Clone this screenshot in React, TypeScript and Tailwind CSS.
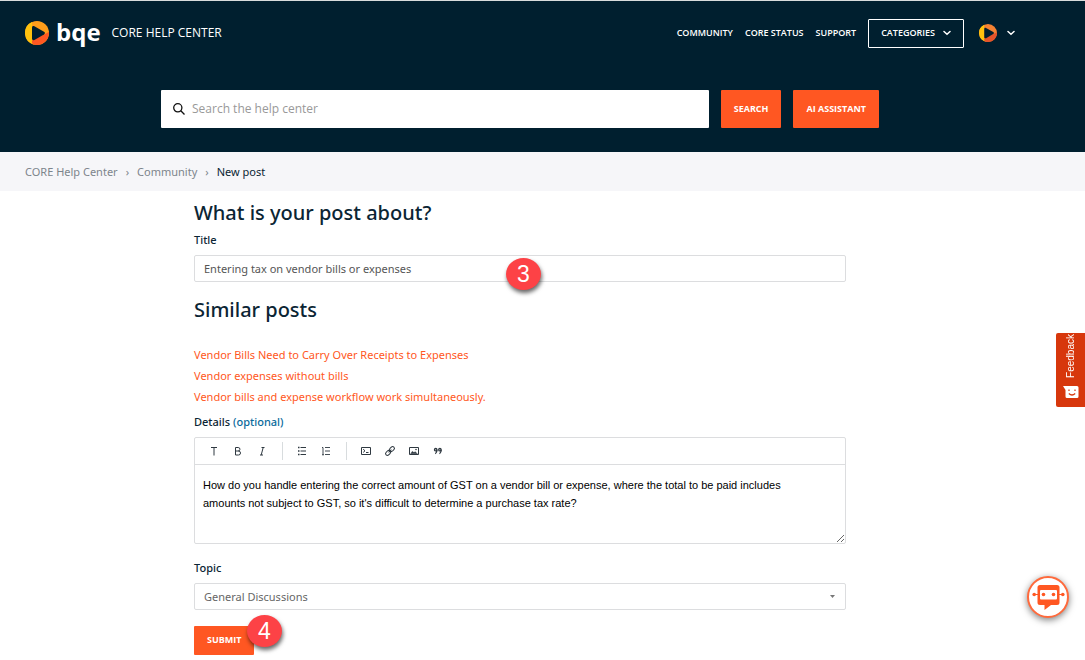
import React from "react";

const navLinks = ["COMMUNITY", "CORE STATUS", "SUPPORT"];

const similarPosts = [
  "Vendor Bills Need to Carry Over Receipts to Expenses",
  "Vendor expenses without bills",
  "Vendor bills and expense workflow work simultaneously.",
];

function Chevron() {
  return (
    <svg width="8" height="6" viewBox="0 0 8 6" fill="none" stroke="currentColor" strokeWidth="1.5" aria-hidden="true">
      <path d="M1 1.500 4 4.200 7 1.500" strokeLinecap="round" />
    </svg>
  );
}

function PlayMark({ className, top, right }: { className: string; top: string; right: string }) {
  return (
    <svg className={className} viewBox="0 0 24 24" aria-hidden="true">
      <circle cx="12" cy="12" r="12" fill={top} />
      <path d="M7 1.1A12 12 0 0 0 9 23.6L7 18Z" fill="#ffc20e" />
      <path d="M23.9 11A12 12 0 0 1 8.5 23.5C6.500 22.500 6.500 20 7.500 19L20 13Z" fill={right} />
      <path d="M7 6.500C7 5 8.200 4.600 9.400 5.200L19 10.700C20.200 11.400 20.200 12.700 19 13.400L9.400 18.900C8.200 19.500 7 19 7 17.600Z" fill="#001f2f" />
    </svg>
  );
}

function Step({ n, className }: { n: number; className: string }) {
  return (
    <span
      className={`absolute flex h-8 w-[35px] items-center justify-center rounded-[50%] bg-[#fd4246] font-['Liberation_Sans',sans-serif] text-[23px] leading-none text-white shadow-[1px_3px_4px_rgba(0,0,0,0.6)] ${className}`}
    >
      {n}
    </span>
  );
}

function Tool({ label, children }: { label: string; children: React.ReactNode }) {
  return (
    <button type="button" aria-label={label} className="flex h-5 w-6 items-center justify-center text-[#2f3941]">
      <svg width="12" height="12" viewBox="0 0 12 12" fill="none" stroke="currentColor" aria-hidden="true">
        {children}
      </svg>
    </button>
  );
}

function Header() {
  return (
    <header className="border-t border-[#d8dcdc] bg-[#001f2f] pr-[45px] font-['Open_Sans',sans-serif] text-white">
      <div className="flex h-16 items-center justify-between px-[25px]">
        <a href="#home" className="flex items-center">
          <PlayMark className="size-6" top="#ff9e1b" right="#ff5722" />
          <span className="ml-[7px] h-9 text-[24px] leading-[34px] font-bold">bqe</span>
          <span className="ml-[11px] text-[12px] font-medium">CORE HELP CENTER</span>
        </a>
        <nav className="flex items-center gap-3 text-[9px] font-semibold">
          {navLinks.map((l) => (
            <a key={l} href="#nav">{l}</a>
          ))}
          <button type="button" className="flex h-[29px] items-center gap-2 rounded-[1px] border border-white px-3">
            CATEGORIES <Chevron />
          </button>
          <button type="button" aria-label="Account" className="ml-[3px] flex items-center gap-[10px]">
            <PlayMark className="size-[18px]" top="#f58233" right="#e5532a" />
            <Chevron />
          </button>
        </nav>
      </div>
      <form className="mx-auto flex h-[87px] max-w-[718px] gap-3 pt-[25px] pb-6" onSubmit={(e) => e.preventDefault()}>
        <label className="flex h-[38px] flex-1 items-center gap-[7px] rounded-[1px] bg-white px-3">
          <svg width="12" height="12" viewBox="0 0 12 12" fill="none" stroke="#111" strokeWidth="1.300" aria-hidden="true">
            <circle cx="4.800" cy="4.800" r="4.100" />
            <path d="m7.800 7.800 3.700 3.700" />
          </svg>
          <input
            type="search"
            aria-label="Search the help center"
            placeholder="Search the help center"
            className="min-w-0 flex-1 text-[12px] text-gray-700 outline-none placeholder:text-[#999]"
          />
        </label>
        <button className="h-[38px] rounded-[1px] bg-[#ff5722] px-[13px] text-[9px] font-bold">SEARCH</button>
        <button type="button" className="h-[38px] rounded-[1px] bg-[#ff5722] px-[13px] text-[9px] font-bold">AI ASSISTANT</button>
      </form>
    </header>
  );
}

export default function App() {
  return (
    <div className="min-h-screen bg-white font-['Noto_Sans',sans-serif] text-[11px] text-[#0b2534]">
      <Header />
      <nav aria-label="Breadcrumb" className="flex h-[39px] items-center gap-2 bg-[#f6f6f9] px-[25px] pt-px text-[#7d858c]">
        <a href="#home">CORE Help Center</a>
        <span>›</span>
        <a href="#community">Community</a>
        <span>›</span>
        <span className="text-[#0b2534]">New post</span>
      </nav>

      <main className="pr-[45px]">
        <form className="mx-auto max-w-[652px] pt-2" onSubmit={(e) => e.preventDefault()}>
          <h1 className="text-[20px] leading-7 font-medium">What is your post about?</h1>
          <label htmlFor="title" className="mt-1 block leading-[18px] font-medium">Title</label>
          <div className="relative mt-[6px]">
            <input
              id="title"
              defaultValue="Entering tax on vendor bills or expenses"
              className="block h-[27px] w-full rounded-[2px] border border-[#dcdddf] px-[9px] text-[#555] outline-none"
            />
            <Step n={3} className="top-[3px] left-[312px]" />
          </div>

          <h2 className="mt-[14px] text-[20px] leading-7 font-medium">Similar posts</h2>
          <ul className="mt-5 text-[#ff5722]">
            {similarPosts.map((p) => (
              <li key={p} className="leading-[21px]">
                <a href="#post">{p}</a>
              </li>
            ))}
          </ul>

          <label htmlFor="details" className="mt-[6px] block leading-[18px] font-medium">
            Details <span className="text-[#0a6a9c]">(optional)</span>
          </label>
          <div className="mt-[6px] rounded-[2px] border border-[#dcdddf]">
            <div role="toolbar" aria-label="Formatting" className="flex h-[27px] items-center border-b border-[#dcdddf] px-[7px]">
              <Tool label="Text style">
                <path d="M3 2.500h6M6 2.500V10.500" />
              </Tool>
              <Tool label="Bold">
                <path d="M3.500 2.500v7.500h3a2 2 0 0 0 0-4h-3M6.200 6a1.750 1.750 0 0 0 0-3.500H3.500" />
              </Tool>
              <Tool label="Italic">
                <path d="M5.500 2.500h3M4 10h3M7.200 2.500 5.200 10" />
              </Tool>
              <span className="mr-[7px] ml-2 h-[18px] w-px bg-[#d8dcde]" />
              <Tool label="Bulleted list">
                <path d="M4.500 2.500H10M4.500 6H10M4.500 9.500H10" />
                <path d="M2 2.500h1.500M2 6h1.500M2 9.500h1.500" strokeWidth="1.500" />
              </Tool>
              <Tool label="Numbered list">
                <path d="M5 2.500h5M5 6h5M5 9.500h5M2 2.500h1v7.500M2 9.800h2" strokeWidth="0.900" />
              </Tool>
              <span className="mr-[7px] ml-2 h-[18px] w-px bg-[#d8dcde]" />
              <Tool label="Code block">
                <path d="M1.500 2.500h9v7h-9zM3.200 4.200 5 5.800 3.200 7.400M6 7.500h2.500" />
              </Tool>
              <Tool label="Link">
                <g transform="rotate(-45 6 6)">
                  <rect x="0.500" y="4.200" width="5.500" height="3.600" rx="1.800" />
                  <rect x="6" y="4.200" width="5.500" height="3.600" rx="1.800" />
                  <path d="M4 6h4" />
                </g>
              </Tool>
              <Tool label="Image">
                <path d="M1.500 2.500h9v7h-9z" />
                <path d="M2.500 8.700 4.300 6.300 6 7.600l1-1 2.500 2.100ZM7.500 4h1v1h-1z" fill="currentColor" strokeWidth="0.300" />
              </Tool>
              <Tool label="Quote">
                <g fill="none" strokeWidth="1.300">
                  <circle cx="3.700" cy="4.700" r="1.200" />
                  <circle cx="7.900" cy="4.700" r="1.200" />
                  <path d="M5 4.700Q5 7.500 3.300 8.700M9.200 4.700Q9.200 7.500 7.500 8.700" />
                </g>
              </Tool>
            </div>
            <textarea
              id="details"
              defaultValue="How do you handle entering the correct amount of GST on a vendor bill or expense, where the total to be paid includes amounts not subject to GST, so it's difficult to determine a purchase tax rate?"
              className="block h-[78px] w-full resize-y px-2 py-[11px] pr-10 font-['Liberation_Sans',sans-serif] text-[11px] leading-[18px] text-black outline-none"
            />
          </div>

          <label htmlFor="topic" className="mt-[15px] block leading-[18px] font-medium">Topic</label>
          <div className="relative mt-[6px]">
            <select
              id="topic"
              className="block h-[27px] w-full appearance-none rounded-[2px] border border-[#dcdddf] bg-white px-[9px] pt-px text-[#666] outline-none"
            >
              <option>General Discussions</option>
            </select>
            <svg className="pointer-events-none absolute top-3 right-[11px]" width="5" height="3" viewBox="0 0 5 3" aria-hidden="true">
              <path d="M0 0h5L2.500 3Z" fill="#777" />
            </svg>
          </div>

          <div className="relative mt-4 flex">
            <button className="h-[29px] rounded-[1px] bg-[#ff5722] px-[13px] pb-px font-['Open_Sans',sans-serif] text-[9px] font-bold text-white">SUBMIT</button>
            <Step n={4} className="-top-[11px] left-[53px]" />
          </div>
        </form>
      </main>

      <button
        type="button"
        className="fixed top-[333px] right-0 flex h-[74px] w-[29px] flex-col items-center justify-between rounded-l-[2px] bg-[#d7370c] pt-px pb-[9px] pl-px text-white"
      >
        <span className="rotate-180 font-['Liberation_Sans',sans-serif] text-[10px] leading-3 [writing-mode:vertical-rl]">Feedback</span>
        <svg width="16" height="12" viewBox="0 0 16 12" aria-hidden="true">
          <path d="M0 0h14q1.500 0 1.500 1.500v9q0 1.500-1.500 1.500H4q-1.500 0-1.500-1.500V4Z" fill="#fff" />
          <path d="M6 3.500v1.500M12 3.500v1.500M5.800 7.500q3.200 3 6.400 0" stroke="#d7370c" strokeWidth="1.200" fill="none" />
        </svg>
      </button>

      <button
        type="button"
        aria-label="Open chat assistant"
        className="fixed right-4 bottom-[42px] flex size-[42px] items-center justify-center rounded-full border-2 border-[#ff6a3c] bg-white shadow-[0_2px_7px_rgba(0,0,0,0.5)]"
      >
        <svg className="shrink-0" width="33" height="28" viewBox="0 0 33 28" aria-hidden="true">
          <path d="M8 2h17q2.500 0 2.500 2.500v15q0 2.500-2.500 2.500h-6l-6.500 5v-5H8q-2.500 0-2.500-2.500v-15Q5.500 2 8 2Z" fill="#ff5722" />
          <rect x="8" y="7" width="17" height="9.500" rx="1" fill="#fff" />
          <path d="M2 11.500h4M27 11.500h4" stroke="#ff5722" strokeWidth="1.200" />
          <g fill="#ff5722">
            <circle cx="2.200" cy="11.500" r="1.800" />
            <circle cx="30.800" cy="11.500" r="1.800" />
            <circle cx="11.500" cy="11.500" r="1.800" />
            <circle cx="21.500" cy="11.500" r="1.800" />
          </g>
        </svg>
      </button>
    </div>
  );
}
